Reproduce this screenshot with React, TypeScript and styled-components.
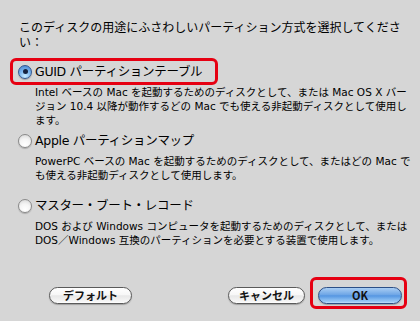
import { FC } from 'react'
import styled, { createGlobalStyle, css } from 'styled-components'

const GlobalStyle = createGlobalStyle`
  html, body {
    margin: 0;
    padding: 0;
    background: #d6d6d6;
  }
  body {
    width: 420px;
    height: 321px;
    overflow: hidden;
    font-family: 'DejaVu Sans', 'Noto Sans CJK JP', sans-serif;
    color: #000;
  }
`

interface OptionType {
  id: string
  label: string
  lines: string[]
}

const options: OptionType[] = [
  {
    id: 'guid',
    label: 'GUID パーティションテーブル',
    lines: [
      'Intel ベースの Mac を起動するためのディスクとして、または Mac OS X バー',
      'ジョン 10.4 以降が動作するどの Mac でも使える非起動ディスクとして使用し',
      'ます。',
    ],
  },
  {
    id: 'apm',
    label: 'Apple パーティションマップ',
    lines: [
      'PowerPC ベースの Mac を起動するためのディスクとして、またはどの Mac で',
      'も使える非起動ディスクとして使用します。',
    ],
  },
  {
    id: 'mbr',
    label: 'マスター・ブート・レコード',
    lines: [
      'DOS および Windows コンピュータを起動するためのディスクとして、または',
      'DOS／Windows 互換のパーティションを必要とする装置で使用します。',
    ],
  },
]

const App: FC = () => {
  const selected = 'guid'
  return (
    <>
      <GlobalStyle />
      <Dialog>
        <Prompt>このディスクの用途にふさわしいパーティション方式を選択してください：</Prompt>
        <OptionList>
          {options.map((o) => (
            <Option key={o.id}>
              <Highlight $on={o.id === selected}>
                <Radio $checked={o.id === selected} />
                <Label>{o.label}</Label>
              </Highlight>
              <Description>
                {o.lines.map((l, i) => (
                  <Line key={i}>{l}</Line>
                ))}
              </Description>
            </Option>
          ))}
        </OptionList>
        <Footer>
          <ButtonFrame>
            <Button $width={83}>デフォルト</Button>
          </ButtonFrame>
          <ButtonFrame $push>
            <Button $width={77}>キャンセル</Button>
          </ButtonFrame>
          <ButtonFrame $on>
            <Button $width={84} $primary>
              OK
            </Button>
          </ButtonFrame>
        </Footer>
      </Dialog>
    </>
  )
}

export default App

const Dialog = styled.div`
  width: 420px;
  height: 321px;
  box-sizing: border-box;
  padding-top: 19px;
  display: flex;
  flex-direction: column;
`

const Prompt = styled.p`
  margin: 0 0 0 19px;
  width: 390px;
  font-size: 12px;
  line-height: 15px;
  font-family: 'Noto Sans CJK JP', sans-serif;
`

const OptionList = styled.div`
  margin-top: 9px;
  display: flex;
  flex-direction: column;
`

const Option = styled.div`
  display: flex;
  flex-direction: column;
  align-items: flex-start;
`

const redFrame = css<{ $on?: boolean }>`
  border: 3px solid ${({ $on }) => ($on ? '#e60012' : 'transparent')};
  border-radius: 6px;
  box-sizing: border-box;
`

const Highlight = styled.div<{ $on?: boolean }>`
  ${redFrame};
  margin-left: 10px;
  height: 27px;
  padding: 0 13px 0 5px;
  display: flex;
  align-items: center;
  gap: 3px;
`

const Radio = styled.span<{ $checked?: boolean }>`
  width: 14px;
  height: 14px;
  border-radius: 50%;
  box-sizing: border-box;
  position: relative;
  flex: none;
  ${({ $checked }) =>
    $checked
      ? css`
          border: 1px solid #34588f;
          background: radial-gradient(circle at 50% 85%, #c9ecff 0%, #7fbaf0 45%, #3f7fd0 100%);
          box-shadow: 0 1px 1px rgba(0, 0, 0, 0.25);
          &::after {
            content: '';
            position: absolute;
            left: 3.5px;
            top: 3.5px;
            width: 5px;
            height: 5px;
            border-radius: 50%;
            background: #15233f;
          }
        `
      : css`
          border: 1px solid #8a8a8a;
          background: radial-gradient(circle at 50% 80%, #ffffff 0%, #f4f4f4 50%, #d2d2d2 100%);
          box-shadow: 0 1px 1px rgba(0, 0, 0, 0.2);
        `}
`

const Label = styled.span`
  font-size: 12.5px;
  line-height: 16px;
  letter-spacing: -0.3px;
  white-space: nowrap;
`

const Description = styled.div`
  margin-left: 35px;
  min-height: 38px;
  font-size: 10.5px;
  line-height: 14px;
`

const Line = styled.span`
  display: block;
  white-space: nowrap;
`

const Footer = styled.div`
  margin-top: auto;
  padding: 0 13px 12px 41px;
  display: flex;
  align-items: flex-end;
`

const ButtonFrame = styled.div<{ $on?: boolean; $push?: boolean }>`
  ${redFrame};
  padding: 7px 2px 2px 5px;
  display: flex;
  ${({ $push }) => $push && 'margin-left: auto;'}
`

const Button = styled.button<{ $width: number; $primary?: boolean }>`
  width: ${({ $width }) => $width}px;
  height: 17px;
  padding: 0;
  border-radius: 9px;
  font-family: 'Noto Sans CJK JP', sans-serif;
  font-size: 11px;
  font-weight: 700;
  line-height: 15px;
  color: #111;
  box-shadow: 0 1px 1px rgba(0, 0, 0, 0.25);
  ${({ $primary }) =>
    $primary
      ? css`
          border: 1px solid #2c4f86;
          background: linear-gradient(#a9cdf3 0%, #6ea6e6 45%, #5596e2 52%, #9bcbf6 90%, #c3e2fb 100%);
        `
      : css`
          border: 1px solid #5a5a5a;
          background: linear-gradient(#ffffff 0%, #f7f7f7 45%, #e8e8e8 52%, #f6f6f6 90%, #ffffff 100%);
        `}
`
